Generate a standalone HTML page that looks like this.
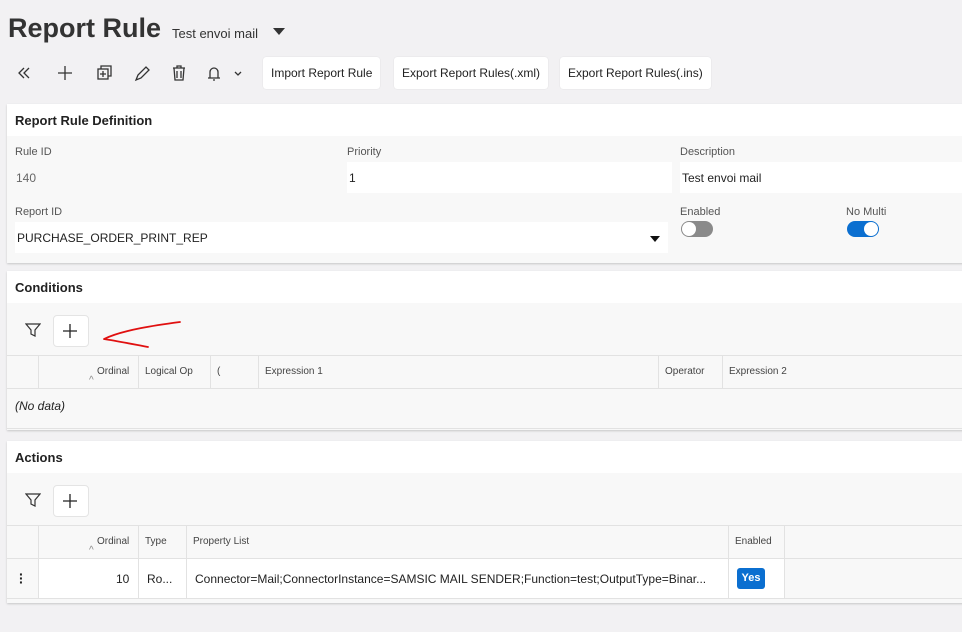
<!DOCTYPE html>
<html><head><style>
*{box-sizing:border-box;margin:0;padding:0}
body{width:962px;height:632px;background:#f2f1f3;font-family:"Liberation Sans",sans-serif;color:#222;position:relative;overflow:hidden}
.a{position:absolute}
.card{position:absolute;left:7px;width:960px;background:#f8f8f8;box-shadow:0 1px 2px rgba(0,0,0,.18)}
.hd{position:absolute;left:0;top:0;right:0;height:32px;background:#fff;font-weight:bold;font-size:13px;padding:9px 8px;color:#222}
.lbl{position:absolute;font-size:11px;color:#555}
.inp{position:absolute;background:#fff;font-size:12px;padding:9px 2px;height:31px}
.btn{position:absolute;top:57px;height:32px;background:#fff;border-radius:3px;font-size:12px;padding:9px 8px;box-shadow:0 0 1px rgba(0,0,0,.15)}
.th{position:absolute;font-size:10px;color:#444}
.vl{position:absolute;width:1px;background:#e2e2e2}
.hl{position:absolute;height:1px;background:#e2e2e2;left:0;right:0}
.sq{position:absolute;width:36px;height:32px;background:#fff;border:1px solid #e4e4e4;border-radius:4px}
</style></head><body>
<div class="a" style="left:8px;top:13px;font-size:27px;font-weight:bold;color:#333">Report Rule</div>
<div class="a" style="left:172px;top:26px;font-size:13px;color:#333">Test envoi mail</div>
<svg class="a" style="left:273px;top:28px" width="12" height="8"><path d="M0 0h12L6 7z" fill="#333"/></svg>
<svg class="a" style="left:14px;top:62px" width="240" height="22" fill="none" stroke="#333" stroke-width="1.3">
<path d="M10 6l-5 5 5 5M15 6l-5 5 5 5"/>
<path d="M51 4v14M44 11h14"/>
<rect x="84" y="7" width="10" height="10"/><path d="M87 7V4h10v10h-3M89 9v6M86 12h6"/>
<path d="M122 18l2-5 8-8 3 3-8 8z"/>
<path d="M159 6h12M163 6V4h4v2M160 6l1 12h8l1-12M163 9v7M167 9v7"/>
<path d="M196 16V10a4 4 0 0 1 8 0v6h2H194M199 18h2"/>
<path d="M221 10l3 3 3-3"/>
</svg>
<div class="btn" style="left:263px">Import Report Rule</div>
<div class="btn" style="left:394px">Export Report Rules(.xml)</div>
<div class="btn" style="left:560px">Export Report Rules(.ins)</div>

<div class="card" style="top:104px;height:159px">
<div class="hd">Report Rule Definition</div>
<div class="lbl" style="left:8px;top:42px">Rule ID</div>
<div class="a" style="left:9px;top:67px;font-size:12px;color:#666">140</div>
<div class="lbl" style="left:340px;top:42px">Priority</div>
<div class="inp" style="left:340px;top:58px;width:325px">1</div>
<div class="lbl" style="left:673px;top:42px">Description</div>
<div class="inp" style="left:673px;top:58px;width:290px">Test envoi mail</div>
<div class="lbl" style="left:8px;top:102px">Report ID</div>
<div class="inp" style="left:8px;top:118px;width:653px">PURCHASE_ORDER_PRINT_REP</div>
<svg class="a" style="left:643px;top:132px" width="10" height="6"><path d="M0 0h10L5 6z" fill="#111"/></svg>
<div class="lbl" style="left:673px;top:102px">Enabled</div>
<div class="a" style="left:674px;top:117px;width:32px;height:16px;border-radius:8px;background:#8a8a8a"><div class="a" style="left:1px;top:1px;width:14px;height:14px;border-radius:7px;background:#fff"></div></div>
<div class="lbl" style="left:839px;top:102px">No Multi</div>
<div class="a" style="left:840px;top:117px;width:32px;height:16px;border-radius:8px;background:#0b6fd0"><div class="a" style="left:17px;top:1px;width:14px;height:14px;border-radius:7px;background:#fff"></div></div>
</div>

<div class="card" style="top:271px;height:159px">
<div class="hd">Conditions</div>
<svg class="a" style="left:18px;top:51px" width="16" height="16" fill="none" stroke="#333" stroke-width="1.2"><path d="M1 2h14l-5 6v6l-4-2V8z"/></svg>
<div class="sq" style="left:46px;top:44px"></div>
<svg class="a" style="left:56px;top:53px" width="14" height="14" stroke="#222" stroke-width="1.3"><path d="M7 0v14M0 7h14"/></svg>
<svg class="a" style="left:90px;top:45px" width="90" height="35" fill="none" stroke="#e01010" stroke-width="1.8" stroke-linecap="round"><path d="M83 6C60 9 25 14 7 23M7 23C20 25 35 28 51 31"/></svg>
<div class="hl" style="top:84px"></div>
<div class="hl" style="top:117px"></div>
<div class="hl" style="top:157px"></div>
<div class="vl" style="left:31px;top:84px;height:33px"></div>
<div class="vl" style="left:131px;top:84px;height:33px"></div>
<div class="vl" style="left:203px;top:84px;height:33px"></div>
<div class="vl" style="left:251px;top:84px;height:33px"></div>
<div class="vl" style="left:651px;top:84px;height:33px"></div>
<div class="vl" style="left:715px;top:84px;height:33px"></div>
<div class="th" style="left:90px;top:95px">Ordinal</div>
<div class="th" style="left:82px;top:104px;color:#888">^</div>
<div class="th" style="left:138px;top:95px">Logical Op</div>
<div class="th" style="left:210px;top:95px">(</div>
<div class="th" style="left:258px;top:95px">Expression 1</div>
<div class="th" style="left:658px;top:95px">Operator</div>
<div class="th" style="left:722px;top:95px">Expression 2</div>
<div class="a" style="left:8px;top:128px;font-size:12px;font-style:italic">(No data)</div>
</div>

<div class="card" style="top:441px;height:162px">
<div class="hd">Actions</div>
<svg class="a" style="left:18px;top:51px" width="16" height="16" fill="none" stroke="#333" stroke-width="1.2"><path d="M1 2h14l-5 6v6l-4-2V8z"/></svg>
<div class="sq" style="left:46px;top:44px"></div>
<svg class="a" style="left:56px;top:53px" width="14" height="14" stroke="#222" stroke-width="1.3"><path d="M7 0v14M0 7h14"/></svg>
<div class="hl" style="top:84px"></div>
<div class="a" style="left:31px;top:117px;width:690px;height:40px;background:#fff"></div>
<div class="a" style="left:721px;top:117px;width:56px;height:40px;background:#fff"></div>
<div class="hl" style="top:117px"></div>
<div class="hl" style="top:157px"></div>
<div class="vl" style="left:31px;top:84px;height:73px"></div>
<div class="vl" style="left:131px;top:84px;height:73px"></div>
<div class="vl" style="left:179px;top:84px;height:73px"></div>
<div class="vl" style="left:721px;top:84px;height:73px"></div>
<div class="vl" style="left:777px;top:84px;height:73px"></div>
<div class="th" style="left:90px;top:95px">Ordinal</div>
<div class="th" style="left:82px;top:104px;color:#888">^</div>
<div class="th" style="left:138px;top:95px">Type</div>
<div class="th" style="left:186px;top:95px">Property List</div>
<div class="th" style="left:728px;top:95px">Enabled</div>
<div class="a" style="left:12px;top:131px;font-size:14px;font-weight:bold;line-height:4px">·<br>·<br>·</div>
<div class="a" style="left:109px;top:131px;font-size:12px">10</div>
<div class="a" style="left:140px;top:131px;font-size:12px">Ro...</div>
<div class="a" style="left:188px;top:131px;font-size:12px">Connector=Mail;ConnectorInstance=SAMSIC MAIL SENDER;Function=test;OutputType=Binar...</div>
<div class="a" style="left:730px;top:127px;width:28px;height:21px;background:#0b6fd0;border-radius:3px;color:#fff;font-size:11px;font-weight:bold;text-align:center;line-height:21px">Yes</div>
</div>
</body></html>
